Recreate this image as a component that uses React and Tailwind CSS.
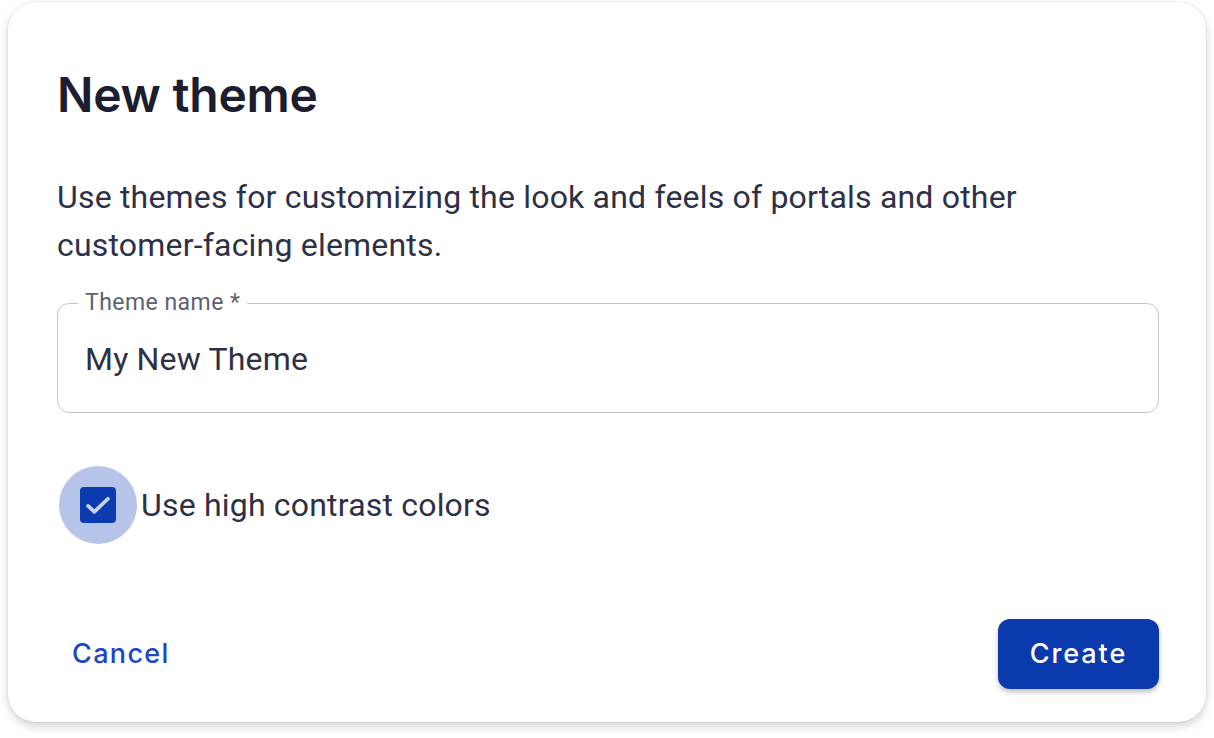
export default function App() {
  return (
    <div className="min-h-screen bg-white pt-[2px] pl-[8px]" style={{ fontFamily: "Roboto, 'Liberation Sans', sans-serif" }}>
      <section className="w-[1198px] h-[720px] rounded-[28px] bg-white shadow-[0_4px_10px_rgba(0,0,0,0.18),0_0_0_1px_rgba(0,0,0,0.04)] pl-[49px] pr-[47px] pt-[64px] flex flex-col">
        {/* Title */}
        <h2 className="font-['Inter',sans-serif] text-[48px] leading-[58px] font-semibold tracking-[-0.005em] text-[#1c1d2f]">
          New theme
        </h2>

        {/* Description */}
        <p className="mt-[49px] text-[32px] leading-[48px] tracking-[0.006em] text-[#2e3046]">
          Use themes for customizing the look and feels of portals and other
          <br />
          customer-facing elements.
        </p>

        {/* Outlined input */}
        <fieldset className="mt-[22px] h-[122px] rounded-[12px] border border-[#c4c4c8] px-[20px]">
          <legend className="px-[7px] text-[23px] leading-[24px] tracking-[0.02em] text-[#5f6072]">Theme name *</legend>
          <div className="pt-[24px] pl-[7px] text-[32px] leading-[40px] tracking-[0.006em] text-[#2e3046]">My New Theme</div>
        </fieldset>

        {/* Checkbox */}
        <label className="mt-[53px] flex items-center">
          <span className="ml-[2px] w-[78px] h-[78px] rounded-full bg-[#b6c4ea] flex items-center justify-center">
            <span className="w-[36px] h-[36px] rounded-[4px] bg-[#0c3bb0] flex items-center justify-center">
              <svg width="34" height="34" viewBox="0 0 24 24" fill="none">
                <path d="M5 12.6l4.4 4.2L19 7.6" stroke="#c9d1ee" strokeWidth="2.6" strokeLinecap="round" strokeLinejoin="round" />
              </svg>
            </span>
          </span>
          <span className="ml-[4px] text-[32px] leading-[40px] tracking-[0.006em] text-[#2e3046]">Use high contrast colors</span>
        </label>

        {/* Actions */}
        <div className="mt-[75px] flex items-center justify-between">
          <button type="button" className="font-['Inter',sans-serif] ml-[15px] text-[27px] font-medium tracking-[0.05em] text-[#1b46c6]">
            Cancel
          </button>
          <button
            type="button"
            className="font-['Inter',sans-serif] w-[161px] h-[70px] rounded-[12px] bg-[#0b3aae] text-white text-[27px] font-medium tracking-[0.07em] shadow-[0_3px_5px_rgba(0,0,0,0.25)]"
          >
            Create
          </button>
        </div>
      </section>
    </div>
  );
}
